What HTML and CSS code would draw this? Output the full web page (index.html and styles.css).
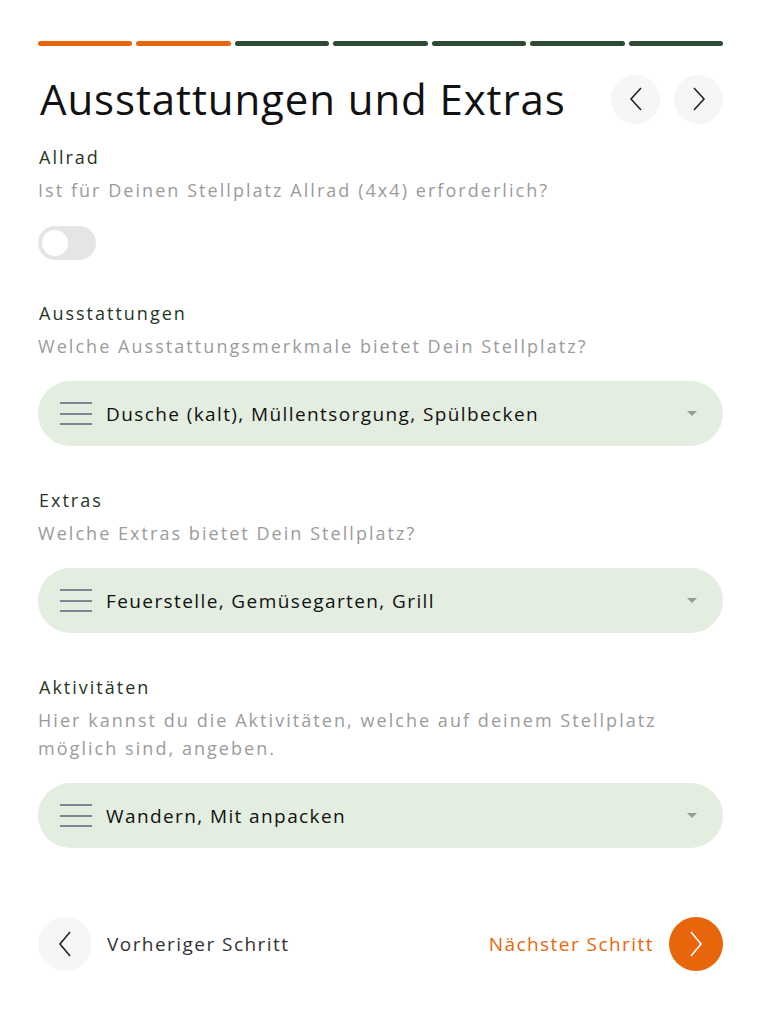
FILE: index.html
```html
<!DOCTYPE html>
<html lang="de">
<head>
<meta charset="utf-8">
<link rel="stylesheet" href="styles.css">
</head>
<body>
<div class="page">
  <div class="progress">
    <span class="seg done"></span><span class="seg done"></span><span class="seg"></span><span class="seg"></span><span class="seg"></span><span class="seg"></span><span class="seg"></span>
  </div>
  <div class="header">
    <h1 class="title">Ausstattungen und Extras</h1>
    <div class="nav">
      <button class="circle light"><svg width="16" height="26" viewBox="0 0 16 26"><path d="M13 2 L3 13 L13 24" fill="none" stroke="#222" stroke-width="1.6"/></svg></button>
      <button class="circle light"><svg width="16" height="26" viewBox="0 0 16 26"><path d="M3 2 L13 13 L3 24" fill="none" stroke="#222" stroke-width="1.6"/></svg></button>
    </div>
  </div>

  <section class="field first">
    <div class="label">Allrad</div>
    <div class="desc">Ist für Deinen Stellplatz Allrad (4x4) erforderlich?</div>
    <div class="toggle"><span class="knob"></span></div>
  </section>

  <section class="field second">
    <div class="label">Ausstattungen</div>
    <div class="desc">Welche Ausstattungsmerkmale bietet Dein Stellplatz?</div>
    <div class="select">
      <span class="burger"><i></i><i></i><i></i></span>
      <span class="value">Dusche (kalt), Müllentsorgung, Spülbecken</span>
      <span class="caret"></span>
    </div>
  </section>

  <section class="field">
    <div class="label">Extras</div>
    <div class="desc">Welche Extras bietet Dein Stellplatz?</div>
    <div class="select">
      <span class="burger"><i></i><i></i><i></i></span>
      <span class="value">Feuerstelle, Gemüsegarten, Grill</span>
      <span class="caret"></span>
    </div>
  </section>

  <section class="field">
    <div class="label">Aktivitäten</div>
    <div class="desc">Hier kannst du die Aktivitäten, welche auf deinem Stellplatz möglich sind, angeben.</div>
    <div class="select">
      <span class="burger"><i></i><i></i><i></i></span>
      <span class="value">Wandern, Mit anpacken</span>
      <span class="caret"></span>
    </div>
  </section>

  <div class="footer">
    <div class="step prev">
      <button class="circle light big"><svg width="16" height="28" viewBox="0 0 16 28"><path d="M13 2 L3 14 L13 26" fill="none" stroke="#222" stroke-width="1.6"/></svg></button>
      <span>Vorheriger Schritt</span>
    </div>
    <div class="step next">
      <span>Nächster Schritt</span>
      <button class="circle orange big"><svg width="16" height="28" viewBox="0 0 16 28"><path d="M3 2 L13 14 L3 26" fill="none" stroke="#fff" stroke-width="1.6"/></svg></button>
    </div>
  </div>
</div>
</body>
</html>
```
FILE: styles.css
```css
* { box-sizing: border-box; }
html, body { margin: 0; padding: 0; background: #fff; }
body { font-family: "Open Sans", "DejaVu Sans", sans-serif; color: #1f2a1f; }
.page { padding: 41px 52px 0 38px; }
.progress { display: flex; gap: 4px; }
.seg { flex: 1; height: 5px; border-radius: 3px; background: #2f4a33; }
.seg.done { background: #e8650c; }
.header { display: flex; align-items: center; justify-content: space-between; margin-top: 25px; }
.title { margin: 0 0 0 2px; font-size: 42px; font-weight: 400; letter-spacing: 0.9px; color: #111; line-height: 56px; }
.nav { display: flex; gap: 14px; }
.circle { border: none; padding: 0; border-radius: 50%; display: flex; align-items: center; justify-content: center; width: 49px; height: 49px; }
.circle.light { background: #f6f6f6; }
.circle.big { width: 54px; height: 54px; }
.circle.orange { background: #e8650c; }
.field { margin-top: 42px; }
.field.first { margin-top: 18px; }
.field.second { margin-top: 41px; }
.label { font-size: 18px; letter-spacing: 2px; color: #24361f; line-height: 24px; margin-left: 1px; }
.desc { font-size: 18px; letter-spacing: 2.05px; color: #9b9b9b; line-height: 28px; margin-top: 7px; }
.toggle { width: 58px; height: 34px; border-radius: 17px; background: #e5e5e5; margin-top: 22px; padding: 4px; }
.knob { display: block; width: 26px; height: 26px; border-radius: 50%; background: #fff; }
.select { display: flex; align-items: center; height: 65px; border-radius: 33px; background: #e3ede0; margin-top: 21px; padding: 0 26px 0 22px; }
.burger { display: flex; flex-direction: column; gap: 8.5px; width: 32px; }
.burger i { display: block; height: 2px; background: #7b8794; }
.value { flex: 1; margin-left: 14px; font-size: 19px; letter-spacing: 1.4px; color: #111; }
.caret { width: 0; height: 0; border-left: 5px solid transparent; border-right: 5px solid transparent; border-top: 5px solid #999; }
.footer { display: flex; justify-content: space-between; align-items: center; margin-top: 69px; }
.step { display: flex; align-items: center; gap: 15px; font-size: 19px; letter-spacing: 1.45px; }
.prev { color: #333; }
.next { color: #e8650c; }
```
